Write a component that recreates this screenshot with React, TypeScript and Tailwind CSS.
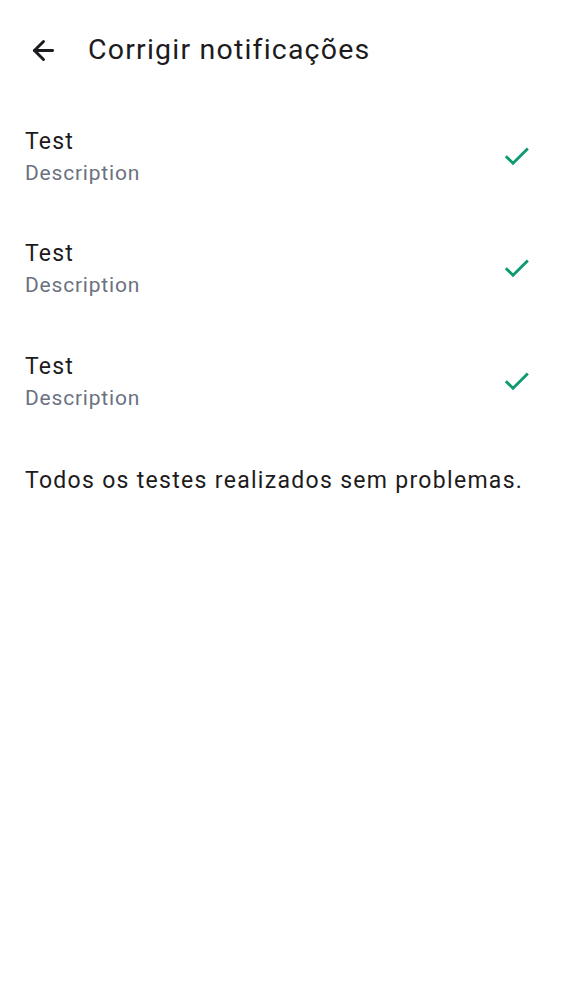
import { ArrowLeft } from 'lucide-react';

const tests = [
  { title: 'Test', description: 'Description' },
  { title: 'Test', description: 'Description' },
  { title: 'Test', description: 'Description' },
];

function CheckIcon() {
  return (
    <svg viewBox="0 0 24 24" className="w-[31px] h-[31px]" fill="none">
      <path d="M4.5 12.5l4.8 4.8L20 6.6" stroke="#0e9a73" strokeWidth="2.2" strokeLinecap="square" />
    </svg>
  );
}

export default function App() {
  return (
    <div className="min-h-[1000px] bg-white text-[#1d1b20]" style={{ fontFamily: 'Roboto, sans-serif' }}>
      {/* Top bar */}
      <div className="flex items-center h-[100px] pl-[28px]">
        <ArrowLeft className="w-[31px] h-[31px] text-[#1d1b20]" strokeWidth={2.3} />
        <h1 className="ml-[29px] text-[28.5px] leading-none tracking-[1.2px]">Corrigir notificações</h1>
      </div>

      {/* Test list */}
      <div className="flex flex-col">
        {tests.map((t, i) => (
          <div key={i} className="flex items-center justify-between h-[112.5px] pl-[25px] pr-[30px]">
            <div className="flex flex-col pt-[2px]">
              <span className="text-[23px] leading-[32px] tracking-[1.2px]">{t.title}</span>
              <span className="text-[21px] leading-[31px] tracking-[0.8px] text-[#6b7280]">{t.description}</span>
            </div>
            <CheckIcon />
          </div>
        ))}
      </div>

      <p className="px-[25px] pt-[27px] text-[23px] leading-[32px] tracking-[1.3px]">Todos os testes realizados sem problemas.</p>
    </div>
  );
}
